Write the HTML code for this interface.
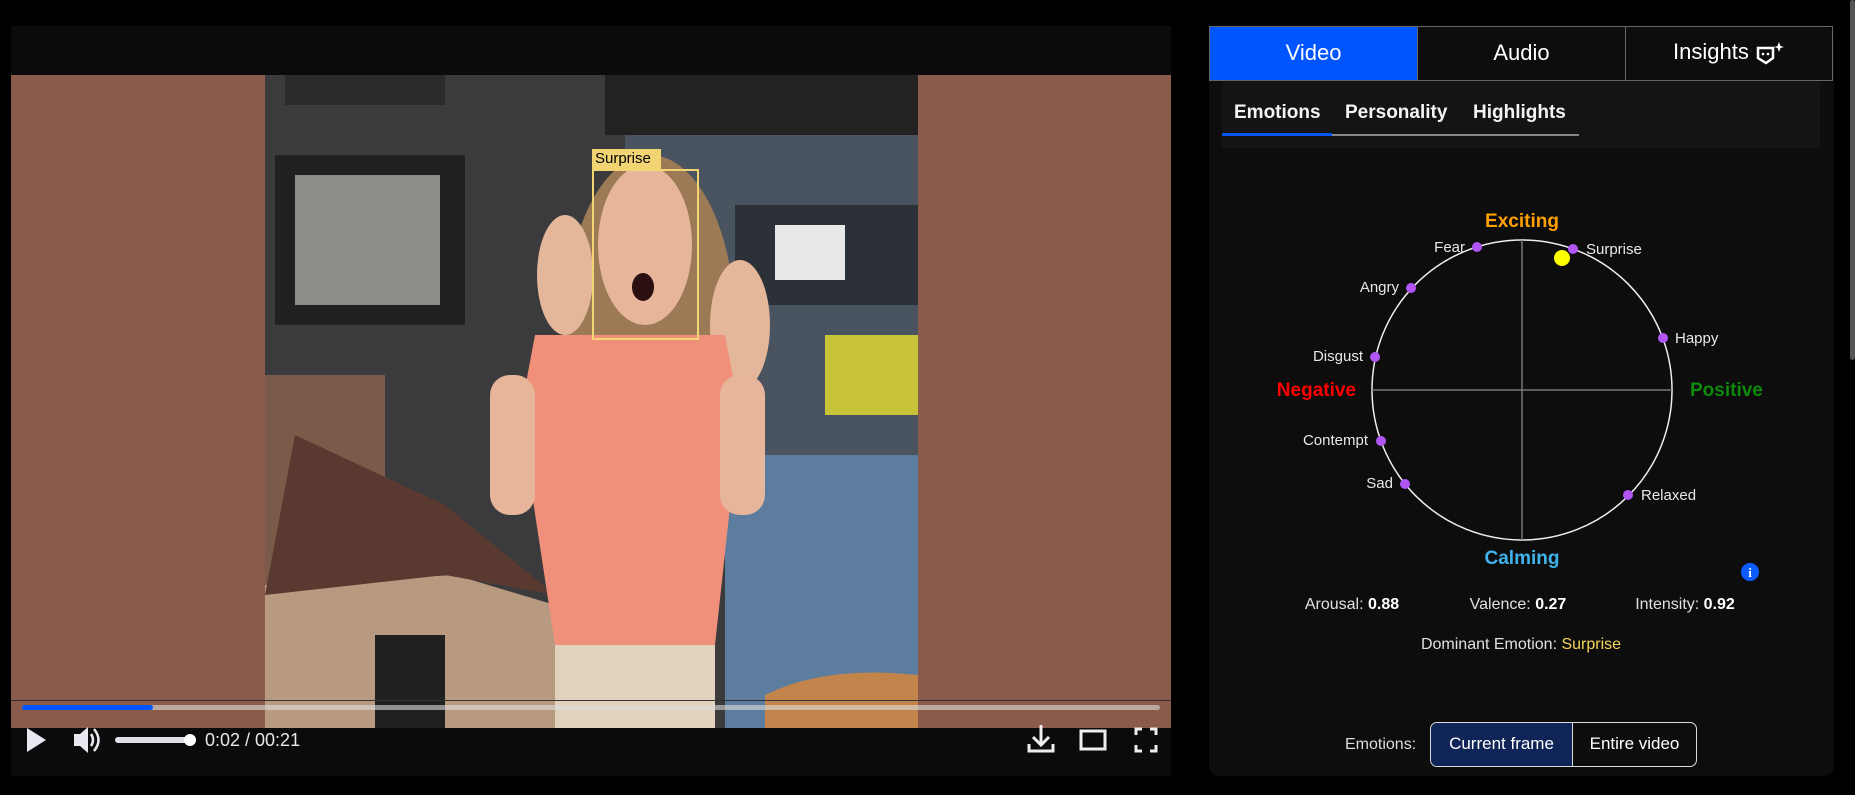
<!DOCTYPE html>
<html><head><meta charset="utf-8"><style>
*{margin:0;padding:0;box-sizing:border-box}
body{width:1855px;height:795px;background:#000;font-family:"Liberation Sans",sans-serif;position:relative;overflow:hidden;color:#fff}
.a{position:absolute}
</style></head><body>
<div class="a" style="left:11px;top:26px;width:1160px;height:750px;background:#0b0b0b"></div>
<div class="a" style="left:11px;top:75px;width:1160px;height:653px;background:#8a5a4a"></div>
<svg class="a" style="left:265px;top:75px" width="653" height="653" viewBox="0 0 653 653">
<rect width="653" height="653" fill="#3b3a3c"/>
<rect x="340" y="0" width="313" height="60" fill="#222"/>
<rect x="360" y="60" width="293" height="420" fill="#4a5360"/>
<rect x="470" y="130" width="183" height="100" fill="#2c3138"/>
<rect x="10" y="80" width="190" height="170" fill="#202020"/>
<rect x="30" y="100" width="145" height="130" fill="#8c8c88"/>
<rect x="20" y="0" width="160" height="30" fill="#2a2a2a"/>
<rect x="510" y="150" width="70" height="55" fill="#e8e8e8"/>
<rect x="560" y="260" width="93" height="80" fill="#c9c33a"/>
<rect x="460" y="380" width="193" height="273" fill="#5d7d9e"/>
<rect x="0" y="300" width="120" height="230" fill="#7a5a48"/>
<path d="M0 510 L190 500 L290 530 L300 653 L0 653 Z" fill="#b89a80"/>
<path d="M30 360 L180 430 L290 520 L180 500 L0 520 Z" fill="#5a3a30"/>
<rect x="110" y="560" width="70" height="93" fill="#202020"/>
<ellipse cx="385" cy="250" rx="85" ry="170" fill="#9b7a55"/>
<ellipse cx="300" cy="200" rx="28" ry="60" fill="#e4b79a"/>
<ellipse cx="475" cy="250" rx="30" ry="65" fill="#e4b79a"/>
<ellipse cx="380" cy="170" rx="47" ry="80" fill="#e6b59a"/>
<ellipse cx="378" cy="212" rx="11" ry="14" fill="#2a1010"/>
<path d="M270 260 L460 260 L475 340 L450 570 L290 570 L255 340 Z" fill="#f0907a"/>
<rect x="225" y="300" width="45" height="140" rx="20" fill="#e6b59a"/>
<rect x="455" y="300" width="45" height="140" rx="20" fill="#e6b59a"/>
<rect x="290" y="570" width="160" height="83" fill="#e0d2bd"/>
<path d="M500 620 Q560 590 653 600 L653 653 L500 653 Z" fill="#c2844a"/>
</svg>
<div class="a" style="left:11px;top:700px;width:1160px;height:1px;background:#333"></div>
<div class="a" style="left:592px;top:149px;width:69px;height:20px;background:#f2d572;color:#000;font-size:15px;line-height:20px;padding-left:3px">Surprise</div>
<div class="a" style="left:592px;top:169px;width:107px;height:171px;border:2px solid #f2d572"></div>
<div class="a" style="left:22px;top:705px;width:1138px;height:5px;border-radius:3px;background:rgba(220,220,220,.6)"></div>
<div class="a" style="left:22px;top:705px;width:131px;height:5px;border-radius:3px;background:#0055ff"></div>
<svg class="a" style="left:0;top:725px" width="1171" height="30">
<path d="M27 3 L46 15 L27 27 Z" fill="#e8e8f0"/>
<path d="M74 9 L80 9 L88 2 L88 28 L80 21 L74 21 Z" fill="#e8e8f0"/>
<path d="M91 9 Q95 15 91 21" stroke="#e8e8f0" stroke-width="2.5" fill="none"/>
<path d="M94 4 Q103 15 94 26" stroke="#e8e8f0" stroke-width="2.5" fill="none"/>
<rect x="115" y="12" width="76" height="6" rx="3" fill="#e0e0e8"/>
<circle cx="190" cy="15" r="6" fill="#fff"/>
<text x="205" y="21" fill="#e8e8e8" font-size="18" font-family="Liberation Sans">0:02 / 00:21</text>
<path d="M1041 0 L1041 20 M1033 12 L1041 20 L1049 12" stroke="#eee" stroke-width="3" fill="none"/>
<path d="M1029 19 L1029 26 L1053 26 L1053 19" stroke="#eee" stroke-width="3" fill="none"/>
<rect x="1081" y="6" width="24" height="18" stroke="#eee" stroke-width="3" fill="none"/>
<path d="M1136 10 L1136 4 L1142 4 M1150 4 L1156 4 L1156 10 M1156 20 L1156 26 L1150 26 M1142 26 L1136 26 L1136 20" stroke="#eee" stroke-width="3" fill="none"/>
</svg>
<div class="a" style="left:1209px;top:26px;width:625px;height:750px;background:#0d0d0d;border-radius:0 10px 10px 10px"></div>
<div class="a" style="left:1209px;top:26px;width:624px;height:55px;border:1.5px solid #666;display:flex;font-size:22px">
<div style="width:207px;background:#0055ff;text-align:center;line-height:52px">Video</div>
<div style="width:208px;border-left:1.5px solid #666;text-align:center;line-height:52px">Audio</div>
<div style="flex:1;border-left:1.5px solid #666;text-align:center;line-height:50px">Insights <svg width="30" height="24" style="vertical-align:middle" viewBox="0 0 30 24"><path d="M3 7 L18 7 L18 17 L11 22 L3 17 Z" stroke="#fff" stroke-width="2.5" fill="none"/><circle cx="8" cy="13" r="1.3" fill="#fff"/><circle cx="13" cy="13" r="1.3" fill="#fff"/><path d="M24 1 L25.5 5 L29 6 L25.5 7 L24 11 L22.5 7 L19 6 L22.5 5 Z" fill="#fff"/></svg></div>
</div>
<div class="a" style="left:1222px;top:81px;width:598px;height:67px;background:#141414"></div>
<div class="a" style="left:1222px;top:134px;width:357px;height:1.5px;background:#888"></div>
<div class="a" style="left:1222px;top:133px;width:110px;height:3px;background:#0055ff"></div>
<div class="a" style="left:1234px;top:102px;font-size:19px;font-weight:bold;color:#f4f4f4">Emotions</div>
<div class="a" style="left:1345px;top:102px;font-size:19px;font-weight:bold;color:#f4f4f4">Personality</div>
<div class="a" style="left:1473px;top:102px;font-size:19px;font-weight:bold;color:#f4f4f4">Highlights</div>
<svg class="a" style="left:1209px;top:150px" width="625" height="520" font-family="Liberation Sans">
<g transform="translate(-1209,-150)">
<circle cx="1522" cy="390" r="150" stroke="#eee" stroke-width="1.5" fill="none"/>
<path d="M1372 390 H1672 M1522 240 V540" stroke="#777" stroke-width="1.5"/>
<g fill="#b155f5">
<circle cx="1477" cy="247" r="5"/><circle cx="1573" cy="249" r="5"/><circle cx="1411" cy="288" r="5"/><circle cx="1663" cy="338" r="5"/><circle cx="1375" cy="357" r="5"/><circle cx="1381" cy="441" r="5"/><circle cx="1405" cy="484" r="5"/><circle cx="1628" cy="495" r="5"/>
</g>
<circle cx="1562" cy="258" r="8" fill="#ffff00"/>
<g fill="#e8e8e8" font-size="15">
<text x="1465" y="252" text-anchor="end">Fear</text>
<text x="1586" y="254">Surprise</text>
<text x="1399" y="292" text-anchor="end">Angry</text>
<text x="1675" y="343">Happy</text>
<text x="1363" y="361" text-anchor="end">Disgust</text>
<text x="1368" y="445" text-anchor="end">Contempt</text>
<text x="1393" y="488" text-anchor="end">Sad</text>
<text x="1641" y="500">Relaxed</text>
</g>
<g font-size="19" font-weight="bold">
<text x="1522" y="227" text-anchor="middle" fill="#ff9f00">Exciting</text>
<text x="1522" y="564" text-anchor="middle" fill="#3fb4ec">Calming</text>
<text x="1356" y="396" text-anchor="end" fill="#ff0000">Negative</text>
<text x="1690" y="396" fill="#0c8a0c">Positive</text>
</g>
<circle cx="1750" cy="572" r="9" fill="#0a5cff"/>
<text x="1750" y="577" text-anchor="middle" fill="#fff" font-size="13" font-weight="bold" font-family="Liberation Serif">i</text>
<g font-size="16" fill="#e0e0e0">
<text x="1352" y="609" text-anchor="middle">Arousal: <tspan font-weight="bold" fill="#fff">0.88</tspan></text>
<text x="1518" y="609" text-anchor="middle">Valence: <tspan font-weight="bold" fill="#fff">0.27</tspan></text>
<text x="1685" y="609" text-anchor="middle">Intensity: <tspan font-weight="bold" fill="#fff">0.92</tspan></text>
<text x="1521" y="649" text-anchor="middle">Dominant Emotion: <tspan fill="#f5d55a">Surprise</tspan></text>
</g>
</g>
</svg>
<div class="a" style="left:1345px;top:736px;font-size:16px;color:#ddd">Emotions:</div>
<div class="a" style="left:1430px;top:722px;width:267px;height:45px;border:1.5px solid #ddd;border-radius:7px;overflow:hidden;display:flex;font-size:17px">
<div style="width:142px;background:#0f2558;text-align:center;line-height:42px;border-right:1.5px solid #ddd">Current frame</div>
<div style="flex:1;text-align:center;line-height:42px">Entire video</div>
</div>
<div class="a" style="left:1850px;top:0;width:5px;height:360px;background:#555;border-radius:3px"></div>
</body></html>
